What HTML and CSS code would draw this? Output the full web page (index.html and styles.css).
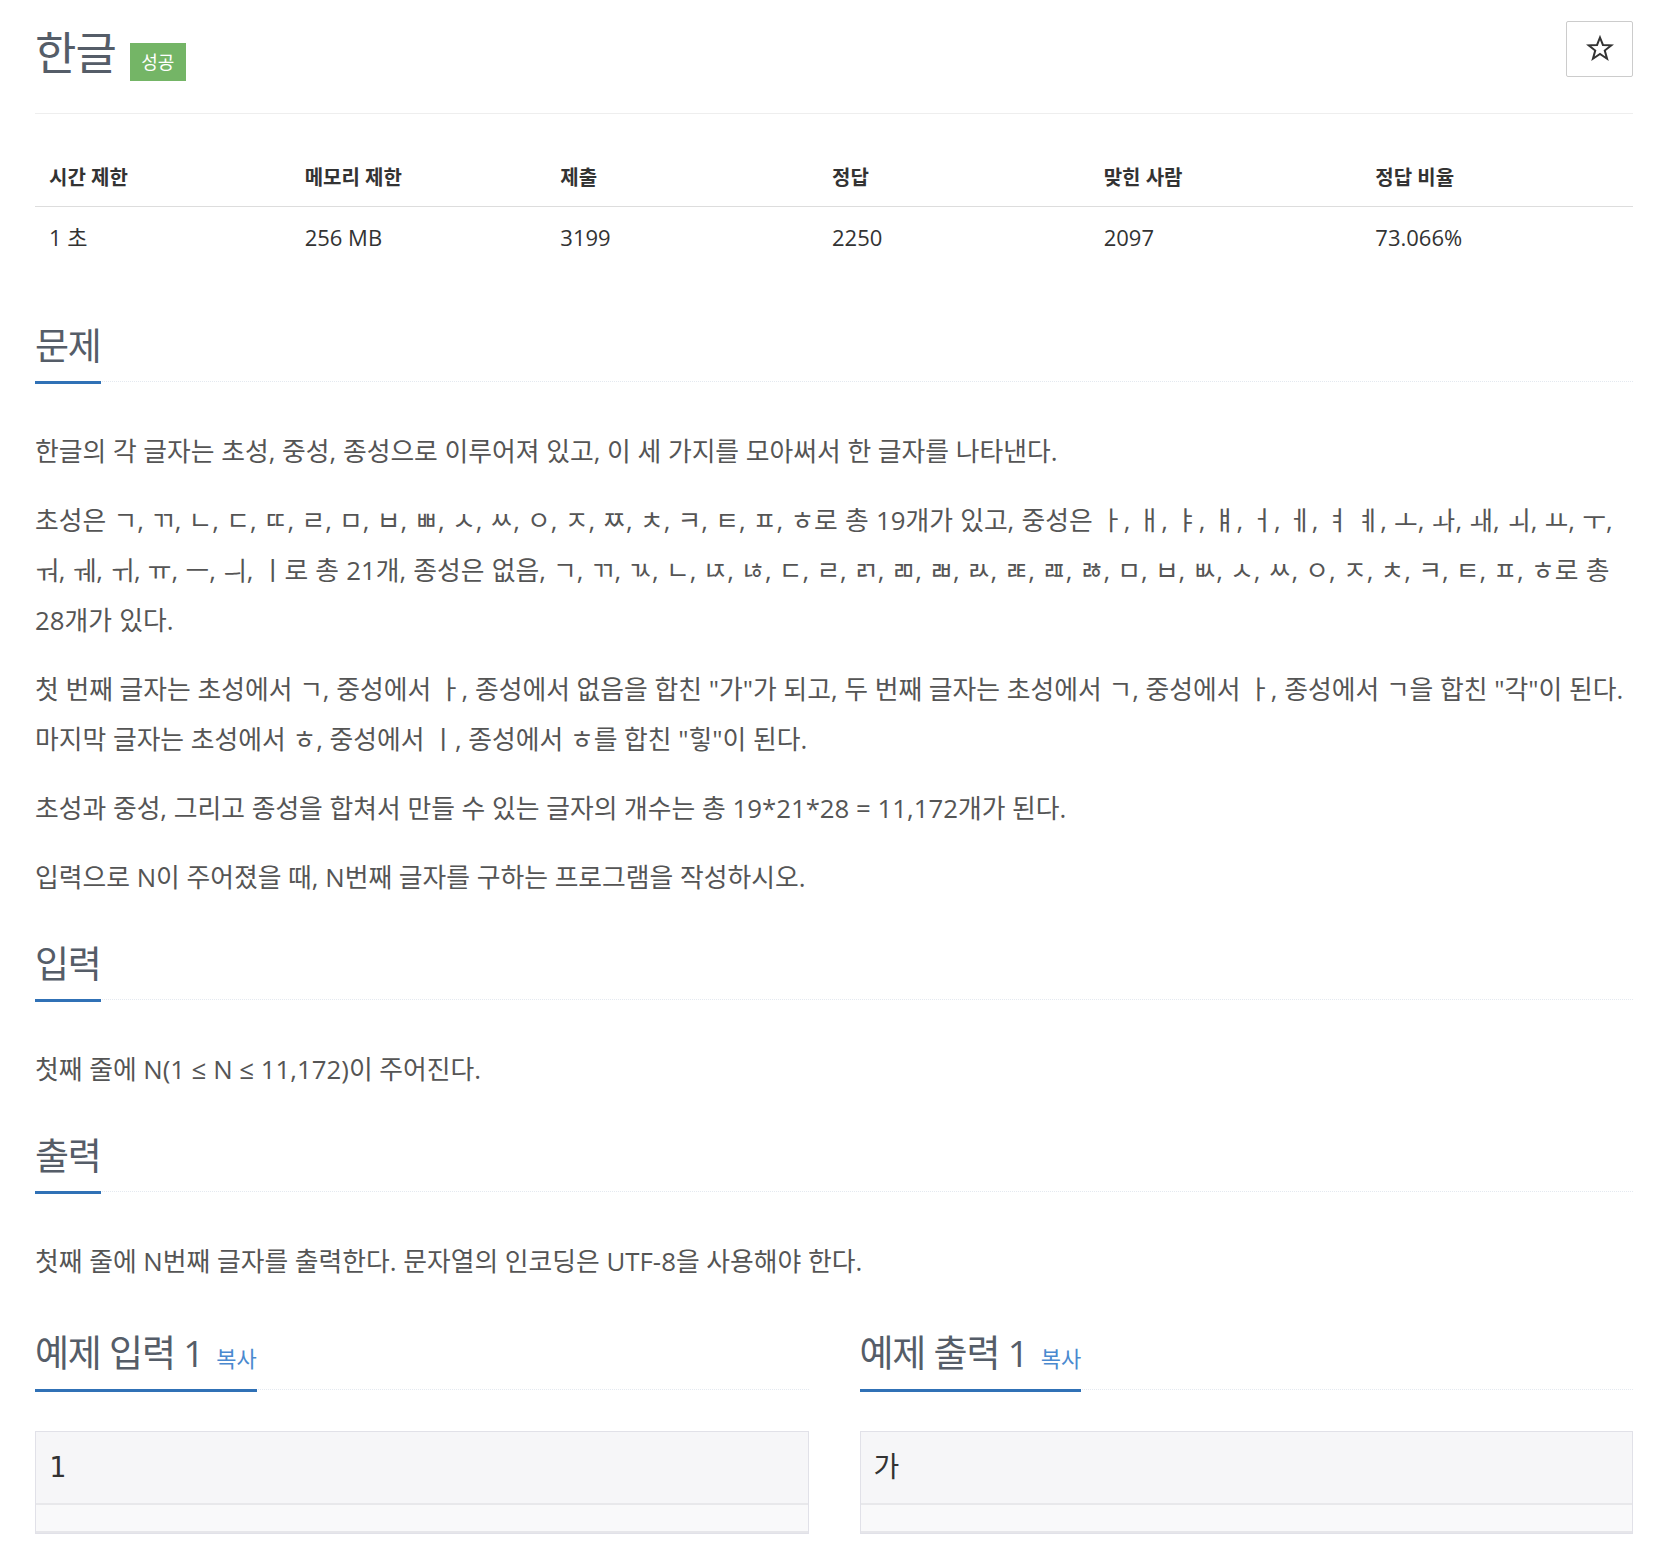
FILE: index.html
```html
<!DOCTYPE html>
<html lang="ko">
<head>
<meta charset="utf-8">
<title>한글</title>
<link rel="stylesheet" href="styles.css">
</head>
<body>
<div class="page">
  <div class="page-header">
    <h1 class="title"><span class="title-text">한글</span><span class="label">성공</span></h1>
    <button class="star-btn" type="button" aria-label="즐겨찾기">
      <svg width="28" height="28" viewBox="-2 -2 28 28" aria-hidden="true"><polygon points="12,0.5 14.94,7.95 23.41,8.29 16.76,13.55 19.05,21.71 12,17 4.95,21.71 7.24,13.55 0.59,8.29 9.06,7.95" fill="none" stroke="#333" stroke-width="2" stroke-linejoin="miter"/></svg>
    </button>
  </div>

  <table class="info">
    <thead>
      <tr><th class="w16">시간 제한</th><th class="w16">메모리 제한</th><th class="w17">제출</th><th class="w17">정답</th><th class="w17">맞힌 사람</th><th class="w17">정답 비율</th></tr>
    </thead>
    <tbody>
      <tr><td>1 초</td><td>256 MB</td><td>3199</td><td>2250</td><td>2097</td><td>73.066%</td></tr>
    </tbody>
  </table>

  <section class="section">
    <div class="headline"><h2>문제</h2></div>
    <div class="text">
      <p>한글의 각 글자는 초성, 중성, 종성으로 이루어져 있고, 이 세 가지를 모아써서 한 글자를 나타낸다.</p>
      <p class="jamo-list">초성은 ㄱ, ㄲ, ㄴ, ㄷ, ㄸ, ㄹ, ㅁ, ㅂ, ㅃ, ㅅ, ㅆ, ㅇ, ㅈ, ㅉ, ㅊ, ㅋ, ㅌ, ㅍ, ㅎ로 총 19개가 있고, 중성은 ㅏ, ㅐ, ㅑ, ㅒ, ㅓ, ㅔ, ㅕ ㅖ, ㅗ, ㅘ, ㅙ, ㅚ, ㅛ, ㅜ, ㅝ, ㅞ, ㅟ, ㅠ, ㅡ, ㅢ, ㅣ로 총 21개, 종성은 없음, ㄱ, ㄲ, ㄳ, ㄴ, ㄵ, ㄶ, ㄷ, ㄹ, ㄺ, ㄻ, ㄼ, ㄽ, ㄾ, ㄿ, ㅀ, ㅁ, ㅂ, ㅄ, ㅅ, ㅆ, ㅇ, ㅈ, ㅊ, ㅋ, ㅌ, ㅍ, ㅎ로 총 28개가 있다.</p>
      <p>첫 번째 글자는 초성에서 ㄱ, 중성에서 ㅏ, 종성에서 없음을 합친 "가"가 되고, 두 번째 글자는 초성에서 ㄱ, 중성에서 ㅏ, 종성에서 ㄱ을 합친 "각"이 된다. 마지막 글자는 초성에서 ㅎ, 중성에서 ㅣ, 종성에서 ㅎ를 합친 "힣"이 된다.</p>
      <p>초성과 중성, 그리고 종성을 합쳐서 만들 수 있는 글자의 개수는 총 19*21*28 = 11,172개가 된다.</p>
      <p>입력으로 N이 주어졌을 때, N번째 글자를 구하는 프로그램을 작성하시오.</p>
    </div>
  </section>

  <section class="section">
    <div class="headline"><h2>입력</h2></div>
    <div class="text">
      <p>첫째 줄에 N(1 ≤ N ≤ 11,172)이 주어진다.</p>
    </div>
  </section>

  <section class="section last">
    <div class="headline"><h2>출력</h2></div>
    <div class="text">
      <p>첫째 줄에 N번째 글자를 출력한다. 문자열의 인코딩은 UTF-8을 사용해야 한다.</p>
    </div>
  </section>

  <div class="samples">
    <section class="sample">
      <div class="headline sample-headline"><h2>예제 입력 1<a class="copy" href="#">복사</a></h2></div>
      <div class="sample-box">
        <pre>1</pre>
        <div class="scroll-track"></div>
      </div>
    </section>
    <section class="sample">
      <div class="headline sample-headline"><h2>예제 출력 1<a class="copy" href="#">복사</a></h2></div>
      <div class="sample-box">
        <pre>가</pre>
        <div class="scroll-track"></div>
      </div>
    </section>
  </div>
</div>
</body>
</html>
```

FILE: styles.css
```css
* { box-sizing: border-box; }

body {
  margin: 0;
  background: #fff;
  font-family: "Open Sans", "Noto Sans CJK KR", sans-serif;
  color: #555;
}

.page {
  padding: 0 41px 40px 35px;
}

/* header */
.page-header {
  height: 114px;
  padding-top: 21px;
  border-bottom: 1px solid #eee;
  display: flex;
  justify-content: space-between;
  align-items: flex-start;
}

.title {
  margin: 7px 0 0;
  display: flex;
  align-items: flex-start;
  font-size: 45px;
  line-height: 50px;
  font-weight: 400;
  color: #555d68;
  letter-spacing: -1px;
}

.label {
  margin: 15px 0 0 14px;
  width: 56px;
  height: 38px;
  display: flex;
  align-items: center;
  justify-content: center;
  background: #74b566;
  color: #fff;
  font-size: 18px;
  line-height: 1;
  letter-spacing: 0;
}

.star-btn {
  width: 67px;
  height: 56px;
  padding: 0;
  border: 1px solid #ccc;
  border-radius: 2px;
  background: #fff;
  display: flex;
  align-items: center;
  justify-content: center;
}

.star-btn svg { display: block; }

/* info table */
.info {
  width: 100%;
  border-collapse: collapse;
  margin: 36px 0 58px;
  color: #333;
}

.info .w16 { width: 16%; }
.info .w17 { width: 17%; }

.info th {
  text-align: left;
  font-size: 20px;
  font-weight: 700;
  line-height: 32px;
  padding: 12px 14px;
  border-bottom: 1px solid #ddd;
}

.info td {
  font-size: 22px;
  line-height: 32px;
  padding: 14px 14px 13px;
}

/* sections */
.section {
  margin-bottom: 40px;
}

.section.last {
  margin-bottom: 45px;
}

.headline {
  display: flex;
  border-bottom: 1px dotted #e4e9f0;
  margin-bottom: 44px;
}

.headline h2 {
  margin: 0 0 -3px;
  padding-bottom: 14px;
  border-bottom: 3px solid #3071b6;
  font-size: 37px;
  line-height: 43px;
  font-weight: 400;
  color: #555d68;
  letter-spacing: -1.2px;
}

.text p {
  margin: 0 0 19px;
  font-size: 25.8px;
  line-height: 50px;
}

.text .jamo-list {
  word-spacing: 0.5px;
}

/* samples */
.samples {
  display: grid;
  grid-template-columns: 1fr 1fr;
  column-gap: 51px;
}

.sample-headline {
  margin-bottom: 41px;
}

.sample-headline h2 {
  padding-bottom: 15px;
}

.copy {
  font-size: 22px;
  line-height: 1;
  letter-spacing: 0;
  color: #4a89cf;
  text-decoration: none;
  margin-left: 13px;
}

.sample-box {
  border: 1px solid #e1e1e8;
  background: #f6f6f8;
}

.sample-box pre {
  margin: 0;
  height: 71px;
  padding: 0 13px;
  font-family: "DejaVu Sans Mono", "Noto Sans CJK KR", monospace;
  font-size: 28px;
  line-height: 71px;
  color: #333;
}

.scroll-track {
  height: 30px;
  border-top: 2px solid #e8e8eb;
  border-bottom: 2px solid #e6e6ea;
  background: #f9f9fa;
}
```
